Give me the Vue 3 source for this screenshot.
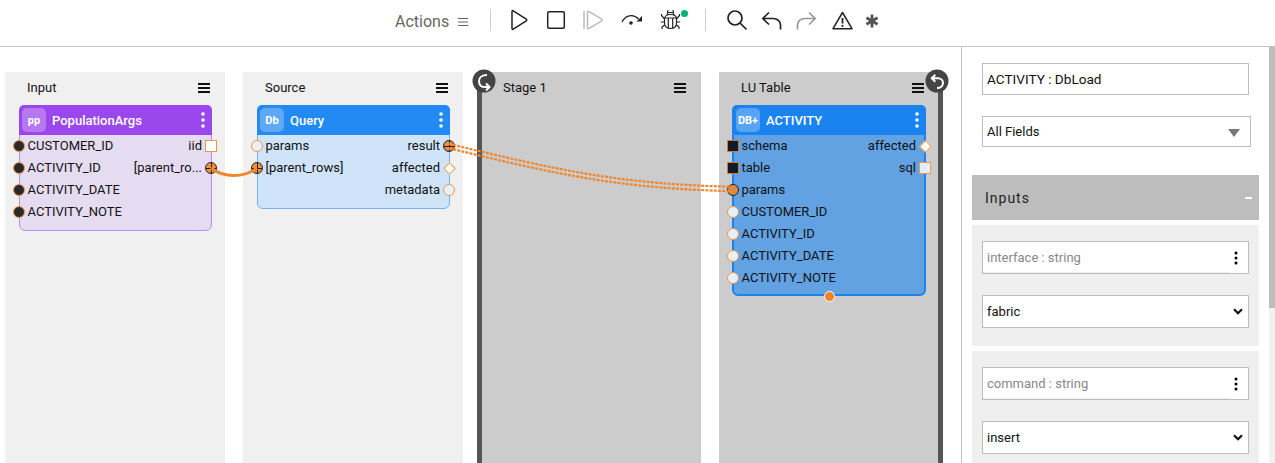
<template>
  <div class="app">
    <header class="toolbar">
      <span class="actions">Actions</span>
      <svg class="menu-small" width="11" height="10" viewBox="0 0 11 10"><path d="M0 1.500h10M0 5h10M0 8.500h10" stroke="#666" fill="none" /></svg>
      <i class="sep sep-a"></i>
      <svg class="tool t-play" width="20" height="22" viewBox="0 0 20 22"><path d="M3 2.500c0-.8.7-1.100 1.300-.7l13 8.400c.6.4.6 1.200 0 1.600l-13 8.400c-.6.4-1.300 0-1.300-.7z" fill="none" stroke="#222" stroke-width="1.500" /></svg>
      <svg class="tool t-stop" width="20" height="20" viewBox="0 0 20 20"><rect x="1.700" y="1.700" width="16.600" height="16.600" rx="1.500" fill="none" stroke="#222" stroke-width="1.500" /></svg>
      <svg class="tool t-step" width="22" height="22" viewBox="0 0 22 22"><path d="M2 2v18" stroke="#bbb" stroke-width="1.500" /><path d="M5.500 3c0-.8.6-1 1.200-.7l13 7.800c.6.4.6 1.400 0 1.800l-13 7.800c-.6.3-1.200 0-1.200-.7z" fill="none" stroke="#bbb" stroke-width="1.500" /></svg>
      <svg class="tool t-over" width="24" height="16" viewBox="0 0 24 16"><path d="M3 10C6 3.500 14 1 19.500 7" fill="none" stroke="#222" stroke-width="1.300" /><path d="M17.500 9.500h5.500V4z" fill="#222" /><circle cx="12" cy="11" r="1.800" fill="#222" /></svg>
      <svg class="tool t-bug" width="21" height="21" viewBox="0 0 21 21"><g fill="none" stroke="#222" stroke-width="1.200"><path d="M4.500 10c0-3 2.500-4.500 6-4.500s6 1.500 6 4.500v4c0 3.500-2.500 5.500-6 5.500s-6-2-6-5.500z" /><path d="M4.500 9h12M8.300 9v10M12.700 9v10M7.500 3.500c0-1 .5-2 .5-2.500M13.500 3.500c0-1-.5-2-.5-2.500M7 6l1-2.500h5l1 2.500M4.500 10L1.500 6.500V5M16.500 10l3-3.500V5M4.500 13H.8M16.500 13h3.700M4.500 16L2 18v2M16.500 16l2.500 2v2" /></g></svg>
      <i class="dot"></i>
      <i class="sep sep-b"></i>
      <svg class="tool t-search" width="22" height="22" viewBox="0 0 22 22"><circle cx="9" cy="9" r="7" fill="none" stroke="#222" stroke-width="1.700" /><path d="M14 14l6.500 6.500" stroke="#222" stroke-width="1.700" /></svg>
      <svg class="tool t-undo" width="21" height="19" viewBox="0 0 21 19"><path d="M8 1.500L1.800 7.500 8 13.500M2 7.500h10c4.500 0 7.500 3 7.500 6.500v4.500" fill="none" stroke="#222" stroke-width="1.700" /></svg>
      <svg class="tool t-redo" width="21" height="19" viewBox="0 0 21 19"><path d="M13 1.500l6.200 6-6.200 6M19 7.500H9C4.500 7.500 1.500 10.500 1.500 14v4.500" fill="none" stroke="#999" stroke-width="1.700" /></svg>
      <svg class="tool t-warn" width="21" height="19" viewBox="0 0 21 19"><path d="M10.500 1.500L1 17.700h19z" fill="none" stroke="#222" stroke-width="1.500" stroke-linejoin="round" /><path d="M10.500 7v5.500" stroke="#222" stroke-width="1.800" /><circle cx="10.500" cy="14.800" r="1.100" fill="#222" /></svg>
      <svg class="tool t-star" width="14" height="14" viewBox="0 0 14 14"><path d="M7 .5v13M1.400 3.700l11.200 6.600M12.600 3.700L1.400 10.300" stroke="#555" stroke-width="2.800" /></svg>
    </header>

    <main class="body">
      <section class="canvas">
        <div v-for="col in columns" :key="col.title" class="col" :class="col.cls">
          <div class="col-head">
            <span>{{ col.title }}</span>
            <svg width="12" height="10" viewBox="0 0 12 10"><path d="M0 1h12M0 5h12M0 9h12" stroke="#111" stroke-width="2" /></svg>
          </div>
          <div v-if="col.node" class="node" :class="col.node.cls">
            <div class="node-head">
              <span class="badge">{{ col.node.badge }}</span>
              <span class="node-title">{{ col.node.name }}</span>
              <svg class="kebab" width="4" height="16" viewBox="0 0 4 16"><circle cx="2" cy="2" r="1.800" /><circle cx="2" cy="8" r="1.800" /><circle cx="2" cy="14" r="1.800" /></svg>
            </div>
            <div class="rows">
              <div v-for="(row, i) in col.node.rows" :key="i" class="row">
                <span v-if="row.l" class="port port-l" :class="row.lp"></span>
                <span class="label-l">{{ row.l }}</span>
                <span class="label-r">{{ row.r }}</span>
                <span v-if="row.r" class="port port-r" :class="row.rp"></span>
              </div>
            </div>
            <span v-if="col.node.foot" class="foot"></span>
          </div>
          <svg v-if="col.cls === 'stage'" class="knob knob-l" width="24" height="24" viewBox="0 0 24 24"><circle cx="12" cy="12" r="11.500" fill="#444" /><path d="M15 6C10 6 7 8.500 7 12c0 3.500 2 6 5 6h5M14 14.500l3.500 3.500-3.500 3.500" fill="none" stroke="#fff" stroke-width="2" /></svg>
          <svg v-if="col.cls === 'lookup'" class="knob knob-r" width="24" height="24" viewBox="0 0 24 24"><circle cx="12" cy="12" r="11.500" fill="#444" /><path d="M7 9.300h6c3 0 5 2.200 5 4.700 0 3-2.500 5-6 5M10.300 5.800L6.800 9.300l3.500 3.500" fill="none" stroke="#fff" stroke-width="2" /></svg>
        </div>
        <svg class="wires" width="961" height="416" viewBox="0 47 961 416">
          <path d="M211 168C224 178 244 178 257 168" fill="none" stroke="#f0862e" stroke-width="3" />
          <g fill="none" stroke="#f0862e" stroke-width="2.200" stroke-dasharray="3 1.200">
            <path d="M449 143.800C560 170.800 620 184 733 186.800" />
            <path d="M449 148.200C560 175.200 620 188.400 733 191.200" />
          </g>
        </svg>
      </section>

      <aside class="panel">
        <div class="panel-main">
          <div class="name-box">ACTIVITY : DbLoad</div>
          <div class="filter">
            <span>All Fields</span>
            <i class="filter-arrow"></i>
          </div>
          <div class="section">
            <span>Inputs</span>
            <i class="minus"></i>
          </div>
          <div v-for="f in fields" :key="f.label" class="card">
            <div class="field">
              <span>{{ f.label }}</span>
              <svg width="4" height="14" viewBox="0 0 4 14"><circle cx="2" cy="2" r="1.500" /><circle cx="2" cy="7" r="1.500" /><circle cx="2" cy="12" r="1.500" /></svg>
            </div>
            <div class="choice">
              <span>{{ f.value }}</span>
              <svg width="10" height="7" viewBox="0 0 10 7"><path d="M1 1.200l4 4 4-4" fill="none" stroke="#111" stroke-width="2.200" /></svg>
            </div>
          </div>
        </div>
        <div class="scroll"><div class="thumb"></div></div>
      </aside>
    </main>
  </div>
</template>

<script setup>
const columns = [
  {
    title: 'Input',
    cls: 'plain',
    node: {
      cls: 'purple',
      badge: 'pp',
      name: 'PopulationArgs',
      rows: [
        { l: 'CUSTOMER_ID', lp: 'dark', r: 'iid', rp: 'sq' },
        { l: 'ACTIVITY_ID', lp: 'dark', r: '[parent_ro...', rp: 'cross' },
        { l: 'ACTIVITY_DATE', lp: 'dark' },
        { l: 'ACTIVITY_NOTE', lp: 'dark' }
      ]
    }
  },
  {
    title: 'Source',
    cls: 'plain',
    node: {
      cls: 'light',
      badge: 'Db',
      name: 'Query',
      rows: [
        { l: 'params', lp: 'open', r: 'result', rp: 'cross' },
        { l: '[parent_rows]', lp: 'cross', r: 'affected', rp: 'dia' },
        { r: 'metadata', rp: 'open' }
      ]
    }
  },
  { title: 'Stage 1', cls: 'stage' },
  {
    title: 'LU Table',
    cls: 'lookup',
    node: {
      cls: 'blue',
      badge: 'DB+',
      name: 'ACTIVITY',
      foot: true,
      rows: [
        { l: 'schema', lp: 'sq-dark', r: 'affected', rp: 'dia' },
        { l: 'table', lp: 'sq-dark', r: 'sql', rp: 'sq' },
        { l: 'params', lp: 'fed' },
        { l: 'CUSTOMER_ID', lp: 'open' },
        { l: 'ACTIVITY_ID', lp: 'open' },
        { l: 'ACTIVITY_DATE', lp: 'open' },
        { l: 'ACTIVITY_NOTE', lp: 'open' }
      ]
    }
  }
]

const fields = [
  { label: 'interface : string', value: 'fabric' },
  { label: 'command : string', value: 'insert' }
]
</script>

<style>
html, body {
  margin: 0;
  height: 100%;
  overflow: hidden;
  background: #fff;
}
</style>

<style scoped>
.app {
  width: 1275px;
  height: 463px;
  overflow: hidden;
  font-family: Roboto, "Liberation Sans", sans-serif;
  color: #111;
}

.toolbar {
  height: 39px;
  padding: 0 0 7px 395px;
  border-bottom: 1px solid #c4c4c4;
  display: flex;
  align-items: center;
}

.actions {
  font-size: 16px;
  color: #666;
  width: 63px;
  margin-top: 3px;
}

.menu-small { margin-top: 5px; }
.sep { width: 1px; height: 22px; background: #ccc; margin-top: 1px; }
.sep-a { margin-left: 21px; }
.tool { flex: none; }
.t-play { margin-left: 18px; }
.t-stop { margin-left: 17px; margin-top: 1px; }
.t-step { margin-left: 16px; }
.t-over { margin-left: 15px; }
.t-bug { margin-left: 17px; margin-top: -1px; }

.dot {
  width: 7px;
  height: 7px;
  border-radius: 50%;
  background: #00b07c;
  margin-top: -12px;
}

.sep-b { margin-left: 17px; }
.t-search { margin-left: 20px; margin-top: 1px; }
.t-undo { margin-left: 13px; margin-top: 1px; }
.t-redo { margin-left: 14px; margin-top: 1px; }
.t-warn { margin-left: 15px; margin-top: 1px; }
.t-star { margin-left: 12px; margin-top: 2px; }

.body {
  display: flex;
  height: 416px;
}

.canvas {
  position: relative;
  width: 961px;
  flex: none;
  display: flex;
  gap: 18px;
  padding: 25px 0 0 5px;
  box-sizing: border-box;
  overflow: hidden;
}

.col {
  position: relative;
  width: 220px;
  flex: none;
  background: #f0f0f0;
  padding: 0 14px;
  box-sizing: border-box;
}

.stage, .lookup { background: #ccc; }
.lookup { padding: 0 13px; }

.stage::before, .lookup::after {
  content: "";
  position: absolute;
  top: 0;
  bottom: 0;
  width: 5px;
  background: #555;
}

.stage::before { left: -4px; }
.lookup::after { right: -4px; }

.knob { position: absolute; top: -3px; z-index: 2; }
.knob-l { left: -9px; }
.knob-r { right: -10px; }

.col-head {
  height: 33px;
  display: flex;
  align-items: center;
  justify-content: space-between;
  font-size: 13px;
  padding: 0 1px 2px 8px;
  box-sizing: border-box;
}

.lookup .col-head { padding-left: 9px; padding-right: 2px; }

.node {
  position: relative;
  width: 193px;
  border: 1px solid;
  border-radius: 6px;
  box-sizing: border-box;
  padding-bottom: 7px;
  z-index: 1;
}

.purple { background: #e6dcf2; border-color: #bd8cf5; }
.light { background: #cfe4f9; border-color: #72b2f5; }
.blue { width: 194px; background: #62a2e3; border: 2px solid #1a83f0; padding-bottom: 5px; }

.node-head {
  height: 30px;
  margin: -1px -1px 0;
  border-radius: 5px 5px 0 0;
  display: flex;
  align-items: center;
  padding: 0 7px 0 3px;
  color: #fff;
}

.purple .node-head { background: #9b47ee; }
.light .node-head { background: #2389f3; }
.blue .node-head { background: #1a83f0; margin: -2px -2px 0; padding-left: 4px; }

.badge {
  width: 24px;
  height: 24px;
  border-radius: 5px;
  background: rgba(255, 255, 255, 0.27);
  font-size: 11px;
  font-weight: 700;
  display: flex;
  align-items: center;
  justify-content: center;
  flex: none;
}

.node-title {
  font-size: 13px;
  font-weight: 500;
  margin-left: 6px;
  flex: 1;
}

.kebab { fill: #fff; flex: none; }

.row {
  position: relative;
  height: 22px;
  display: flex;
  justify-content: space-between;
  align-items: center;
  font-size: 13px;
  padding: 0 9px 2px 7.500px;
  box-sizing: border-box;
}

.blue .row { padding: 0 8px 2px 7.500px; }
.label-l { margin-right: auto; }

.port {
  position: absolute;
  top: 5px;
  width: 12px;
  height: 12px;
  box-sizing: border-box;
  border: 1.500px solid #f0974f;
  border-radius: 50%;
  background: #fff;
}

.port-l { left: -7px; }
.port-r { right: -6px; }
.blue .port-r { right: -7px; }

.port.dark { background: #2a2a2a; }
.port.open { background: #e8f0f8; }
.port.fed { background: #d98a4c; border-color: #222; }

.port.sq {
  border-radius: 0;
  background: #fff;
}

.blue .port.sq { background: #e4eefa; }

.port.sq-dark {
  border-radius: 0;
  background: #111a26;
  border-color: #c9803f;
}

.port.dia {
  width: 9px;
  height: 9px;
  top: 6.500px;
  border-radius: 0;
  transform: rotate(45deg);
  background: #fff;
}

.port-r.dia { right: -4.500px; }
.blue .port-r.dia { right: -5.500px; }

.port.cross {
  border: 1px solid #222;
  background:
    linear-gradient(#222, #222) center / 100% 1px no-repeat,
    linear-gradient(#222, #222) center / 1px 100% no-repeat,
    #f0913f;
}

.foot {
  position: absolute;
  left: 50%;
  bottom: -8px;
  margin-left: -5px;
  width: 11px;
  height: 11px;
  box-sizing: border-box;
  border-radius: 50%;
  background: #f08224;
  border: 1px solid #fff;
}

.wires {
  position: absolute;
  left: 0;
  top: 0;
  z-index: 2;
  pointer-events: none;
}

.panel {
  width: 314px;
  flex: none;
  border-left: 1px solid #c4c4c4;
  box-sizing: border-box;
  overflow: hidden;
  display: flex;
  justify-content: space-between;
}

.panel-main {
  padding: 16px 0 0 10px;
  width: 297px;
  box-sizing: border-box;
}

.name-box {
  margin-left: 10px;
  width: 267px;
  height: 32px;
  box-sizing: border-box;
  border: 1px solid #bdbdbd;
  padding: 0 4px;
  font-size: 13.600px;
  line-height: 31px;
}

.filter {
  margin: 21px 0 0 10px;
  width: 269px;
  height: 31px;
  box-sizing: border-box;
  border: 1px solid #bdbdbd;
  padding: 0 4px;
  font-size: 13px;
  line-height: 29px;
  display: flex;
  align-items: center;
  justify-content: space-between;
}

.filter-arrow {
  width: 0;
  height: 0;
  margin: 2px 6px 0 0;
  border-left: 6px solid transparent;
  border-right: 6px solid transparent;
  border-top: 8px solid #777;
}

.section {
  margin-top: 28px;
  width: 287px;
  height: 45px;
  background: #bdbdbd;
  display: flex;
  align-items: center;
  justify-content: space-between;
  padding: 0 7px 0 13px;
  box-sizing: border-box;
  font-size: 14px;
  letter-spacing: 1px;
  color: #222;
}

.minus {
  width: 7px;
  height: 2px;
  background: #fff;
}

.card {
  margin-top: 5px;
  width: 287px;
  height: 121px;
  background: #efefef;
  padding: 16px 10px 0;
  box-sizing: border-box;
}

.field, .choice {
  width: 267px;
  height: 33px;
  box-sizing: border-box;
  border: 1px solid #bdbdbd;
  background: #fff;
  padding: 0 5px 0 4px;
  display: flex;
  align-items: center;
  justify-content: space-between;
  font-size: 13px;
}

.field { color: #888; padding-right: 10px; }

.field span {
  flex: 1;
  align-self: stretch;
  line-height: 31px;
  margin-left: -4px;
  padding-left: 4px;
  margin-right: 5px;
  border-bottom: 1px solid #eee;
}

.choice { margin-top: 21px; color: #111; }

.scroll {
  width: 6px;
  flex: none;
  align-self: stretch;
  background: #f1f1f1;
}

.thumb {
  height: 261px;
  background: #bdbdbd;
}
</style>
